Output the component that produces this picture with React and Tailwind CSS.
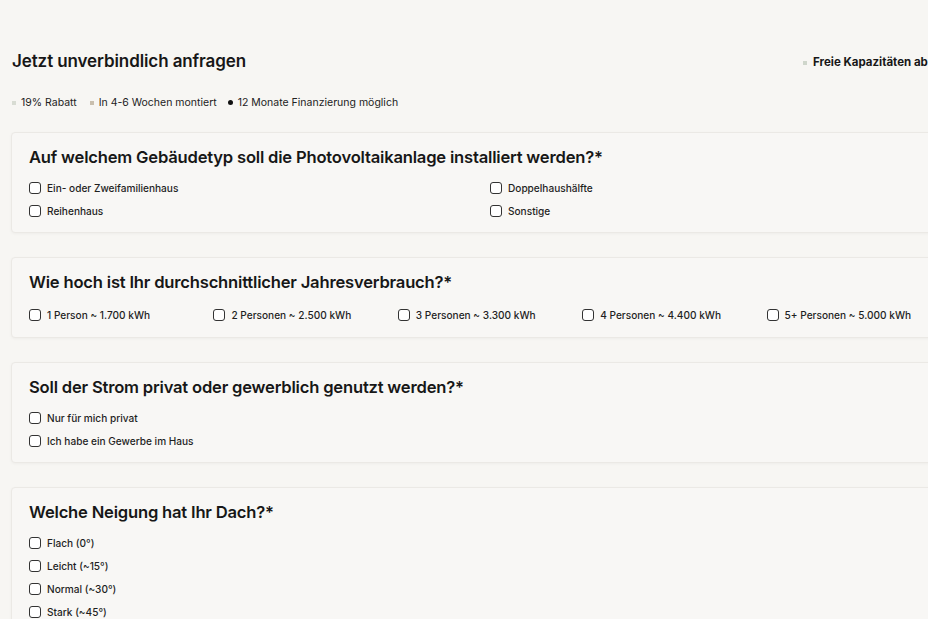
import { useState } from 'react';

const questions = [
  {
    id: 'building',
    title: 'Auf welchem Gebäudetyp soll die Photovoltaikanlage installiert werden?*',
    cols: 'grid-cols-2',
    body: 'mt-[11px]',
    pad: 'pb-[13px]',
    options: ['Ein- oder Zweifamilienhaus', 'Doppelhaushälfte', 'Reihenhaus', 'Sonstige'],
  },
  {
    id: 'usage',
    title: 'Wie hoch ist Ihr durchschnittlicher Jahresverbrauch?*',
    cols: 'grid-cols-5',
    body: 'mt-[13px]',
    pad: 'pb-[14px]',
    options: [
      '1 Person ~ 1.700 kWh',
      '2 Personen ~ 2.500 kWh',
      '3 Personen ~ 3.300 kWh',
      '4 Personen ~ 4.400 kWh',
      '5+ Personen ~ 5.000 kWh',
    ],
  },
  {
    id: 'type',
    title: 'Soll der Strom privat oder gewerblich genutzt werden?*',
    cols: 'grid-cols-1',
    body: 'mt-[11px]',
    pad: 'pb-[13px]',
    options: ['Nur für mich privat', 'Ich habe ein Gewerbe im Haus'],
  },
  {
    id: 'roof',
    title: 'Welche Neigung hat Ihr Dach?*',
    cols: 'grid-cols-1',
    body: 'mt-[11px]',
    pad: 'pb-[13px]',
    options: ['Flach (0°)', 'Leicht (~15°)', 'Normal (~30°)', 'Stark (~45°)'],
  },
];

function Option({ label, checked, onToggle }) {
  return (
    <label className="flex items-center gap-[6px] h-4 cursor-pointer">
      <span
        onClick={onToggle}
        className={`w-3 h-3 rounded-[3px] border border-[#333] shrink-0 ${checked ? 'bg-[#1a1a1a]' : 'bg-white'}`}
      />
      <span className="text-[10.1px] font-medium text-[#1f1f1f] leading-none">{label}</span>
    </label>
  );
}

export default function App() {
  const [checked, setChecked] = useState({});
  const toggle = (key) => setChecked((c) => ({ ...c, [key]: !c[key] }));

  return (
    <div
      className="w-full min-h-[619px] overflow-hidden bg-[#f7f6f3] text-[#171717]"
      style={{ fontFamily: 'Inter, "Liberation Sans", sans-serif' }}
    >
      <div className="w-[980px] pl-[11px] pt-[49px]">
        {/* Header */}
        <div className="flex justify-between items-center pl-px pr-[12px]">
          <h1 className="font-semibold text-[17px] leading-6 tracking-[-0.1px]">Jetzt unverbindlich anfragen</h1>
          <div className="flex items-center gap-[6px] mr-[-1px] pt-[3px] w-[166px]">
            <span className="w-[4px] h-[4px] bg-[#cfd6cb]" />
            <span className="font-bold text-[11.5px]">Freie Kapazitäten ab</span>
          </div>
        </div>

        <div className="flex items-center gap-[11px] mt-[22px] pl-[1px] text-[10.5px] text-[#222]">
          <div className="flex items-center gap-[5px]">
            <span className="w-[4px] h-[4px] bg-[#d8dcd3]" />
            19% Rabatt
          </div>
          <div className="flex items-center gap-[5px] ml-[2px]">
            <span className="w-[4px] h-[4px] bg-[#c9bfae]" />
            In 4-6 Wochen montiert
          </div>
          <div className="flex items-center gap-[5px]">
            <span className="w-[5px] h-[5px] rounded-full bg-[#111]" />
            12 Monate Finanzierung möglich
          </div>
        </div>

        {/* Questions */}
        <div className="flex flex-col gap-6 mt-[21px] w-[958px]">
          {questions.map((q) => (
            <div
              key={q.id}
              className={`bg-[#f8f7f5] border border-[#ebe9e5] rounded-[4px] shadow-[0_1px_3px_rgba(0,0,0,0.04)] pl-[17px] pr-[17px] pt-[12px] ${q.pad}`}
            >
              <h2 className="font-semibold text-[16.6px] leading-6 tracking-[-0.2px]">{q.title}</h2>
              <div className={`grid ${q.cols} gap-y-[7px] ${q.body}`}>
                {q.options.map((o) => (
                  <Option
                    key={o}
                    label={o}
                    checked={!!checked[q.id + o]}
                    onToggle={() => toggle(q.id + o)}
                  />
                ))}
              </div>
            </div>
          ))}
        </div>
      </div>
    </div>
  );
}
